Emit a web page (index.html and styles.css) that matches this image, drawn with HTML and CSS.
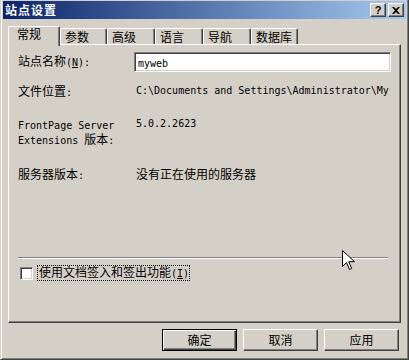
FILE: index.html
```html
<!DOCTYPE html>
<html lang="zh-CN">
<head>
<meta charset="utf-8">
<title>站点设置</title>
<link rel="stylesheet" href="styles.css">
</head>
<body>
<div class="window">
  <div class="titlebar">
    <span class="title">站点设置</span>
    <div class="tbtns">
      <span class="tbtn help">?</span>
      <span class="tbtn close"><svg width="8" height="7" viewBox="0 0 8 7"><path d="M0 0h2l2 2 2-2h2L5 3.5 8 7H6L4 5 2 7H0l3-3.5z" fill="#000"/></svg></span>
    </div>
  </div>
  <div class="client">
    <div class="tabs">
      <div class="tab sel">常规</div>
      <div class="tab w47">参数</div>
      <div class="tab">高级</div>
      <div class="tab">语言</div>
      <div class="tab">导航</div>
      <div class="tab w47">数据库</div>
    </div>
    <div class="panel">
      <div class="row r1">
        <div class="lbl">站点名称<span class="m">(<u>N</u>):</span></div>
        <div class="input"><span class="m">myweb</span></div>
      </div>
      <div class="row r2">
        <div class="lbl">文件位置<span class="m">:</span></div>
        <div class="val m">C:\Documents and Settings\Administrator\My</div>
      </div>
      <div class="row r3">
        <div class="lbl two"><span class="m">FrontPage Server</span><br><span class="m">Extensions </span>版本<span class="m">:</span></div>
        <div class="val m">5.0.2.2623</div>
      </div>
      <div class="row r4">
        <div class="lbl">服务器版本<span class="m">:</span></div>
        <div class="val">没有正在使用的服务器</div>
      </div>
      <div class="spacer"></div>
      <div class="sep"></div>
      <div class="chkrow">
        <span class="chk"></span>
        <span class="chklbl">使用文档签入和签出功能<span class="m">(<u>I</u>)</span></span>
      </div>
    </div>
    <div class="buttons">
      <button class="btn def">确定</button>
      <button class="btn">取消</button>
      <button class="btn">应用</button>
    </div>
  </div>
  <svg class="cursor" width="13" height="21" viewBox="0 0 13 21"><path d="M0.5 0.5v16l4-4 3 7 2.2-1-3-6.8h5.8z" fill="#fff" stroke="#000" stroke-width="1" stroke-linejoin="miter"/></svg>
</div>
</body>
</html>
```
FILE: styles.css
```css
* { box-sizing: border-box; margin: 0; padding: 0; }
html, body { width: 409px; height: 360px; overflow: hidden; background: #d4d0c8; }
body { font: 12px/12px "Noto Sans CJK SC", sans-serif; color: #000; }

.m { font-family: "DejaVu Sans Mono", "Liberation Mono", monospace; font-size: 10px; }
u { text-decoration: underline; text-underline-offset: 1px; }

.window {
  position: relative;
  width: 409px;
  height: 362px;
  margin-top: -2px;
  background: #d4d0c8;
  border: 1px solid;
  border-color: #d4d0c8 #404040 #404040 #d4d0c8;
  box-shadow: inset 1px 1px #fff, inset -1px -1px #808080;
  padding: 2px;
  display: flex;
  flex-direction: column;
}

.titlebar {
  height: 18px;
  flex: none;
  display: flex;
  align-items: center;
  padding-left: 2px;
  background: linear-gradient(to right, #0a246a, #a6caf0);
}
.title { color: #fff; font-weight: bold; font-size: 12px; letter-spacing: 1px; }
.tbtns { margin-left: auto; margin-right: 2px; display: flex; gap: 2px; }
.tbtn {
  width: 16px; height: 14px;
  background: #d4d0c8;
  border: 1px solid;
  border-color: #fff #404040 #404040 #fff;
  box-shadow: inset -1px -1px #808080;
  display: flex; align-items: center; justify-content: center;
  font: bold 11px/12px "Liberation Sans", sans-serif;
}

.client {
  flex: 1;
  display: flex;
  flex-direction: column;
  padding: 7px 5px 0 5px;
}

.tabs { display: flex; align-items: flex-end; height: 18px; flex: none; }
.tab {
  width: 48px; height: 16px;
  padding: 2px 0 0 4px;
  border-top: 1px solid #fff;
  border-left: 1px solid #fff;
  border-right: 1px solid #404040;
  border-radius: 2px 2px 0 0;
  box-shadow: inset -1px 0 #808080;
  background: #d4d0c8;
  white-space: nowrap;
}
.tab.w47 { width: 47px; }
.tab.sel {
  width: 52px; height: 20px;
  padding: 1px 0 0 8px;
  margin-bottom: -2px;
  position: relative;
  z-index: 2;
}

.panel {
  height: 279px;
  flex: none;
  border: 1px solid;
  border-color: #fff #404040 #404040 #fff;
  box-shadow: inset -1px -1px #808080;
  padding: 7px 9px 42px 9px;
  display: flex;
  flex-direction: column;
}
.row { display: flex; align-items: flex-start; }
.lbl { width: 116px; flex: none; white-space: nowrap; }
.lbl.two { line-height: 13px; }
.val { padding-left: 2px; white-space: nowrap; flex: 1; min-width: 0; line-height: 12px; }
.r1 { align-items: center; height: 20px; }
.r2 { margin-top: 13px; }
.r3 { margin-top: 18px; }
.r3 .val { line-height: 13px; }
.r4 { margin-top: 21px; }
.input {
  flex: 1;
  height: 20px;
  background: #fff;
  border: 1px solid;
  border-color: #808080 #fff #fff #808080;
  box-shadow: inset 1px 1px #404040, inset -1px -1px #d4d0c8;
  padding: 3px 0 0 3px;
  line-height: 12px;
}
.spacer { flex: 1; }
.sep { height: 2px; width: 370px; border-top: 1px solid #808080; border-bottom: 1px solid #fff; }
.chkrow { margin-top: 7px; height: 14px; display: flex; align-items: center; }
.chk {
  width: 13px; height: 13px; margin-left: 2px;
  background: #fff;
  border: 1px solid;
  border-color: #808080 #fff #fff #808080;
  box-shadow: inset 1px 1px #404040, inset -1px -1px #d4d0c8;
}
.chklbl { margin-left: 4px; border: 1px dotted #000; padding: 0 0 0 1px; line-height: 12px; }

.buttons { display: flex; justify-content: flex-end; gap: 6px; margin-top: 6px; padding-right: 2px; }
.btn {
  width: 75px; height: 22px;
  font: 12px/12px "Noto Sans CJK SC", sans-serif;
  color: #000;
  background: #d4d0c8;
  border: 1px solid;
  border-color: #fff #404040 #404040 #fff;
  box-shadow: inset -1px -1px #808080;
}
.btn.def {
  border-color: #000;
  box-shadow: inset 1px 1px #fff, inset -1px -1px #404040, inset -2px -2px #808080;
}

.cursor { position: absolute; left: 341px; top: 251px; }
```
